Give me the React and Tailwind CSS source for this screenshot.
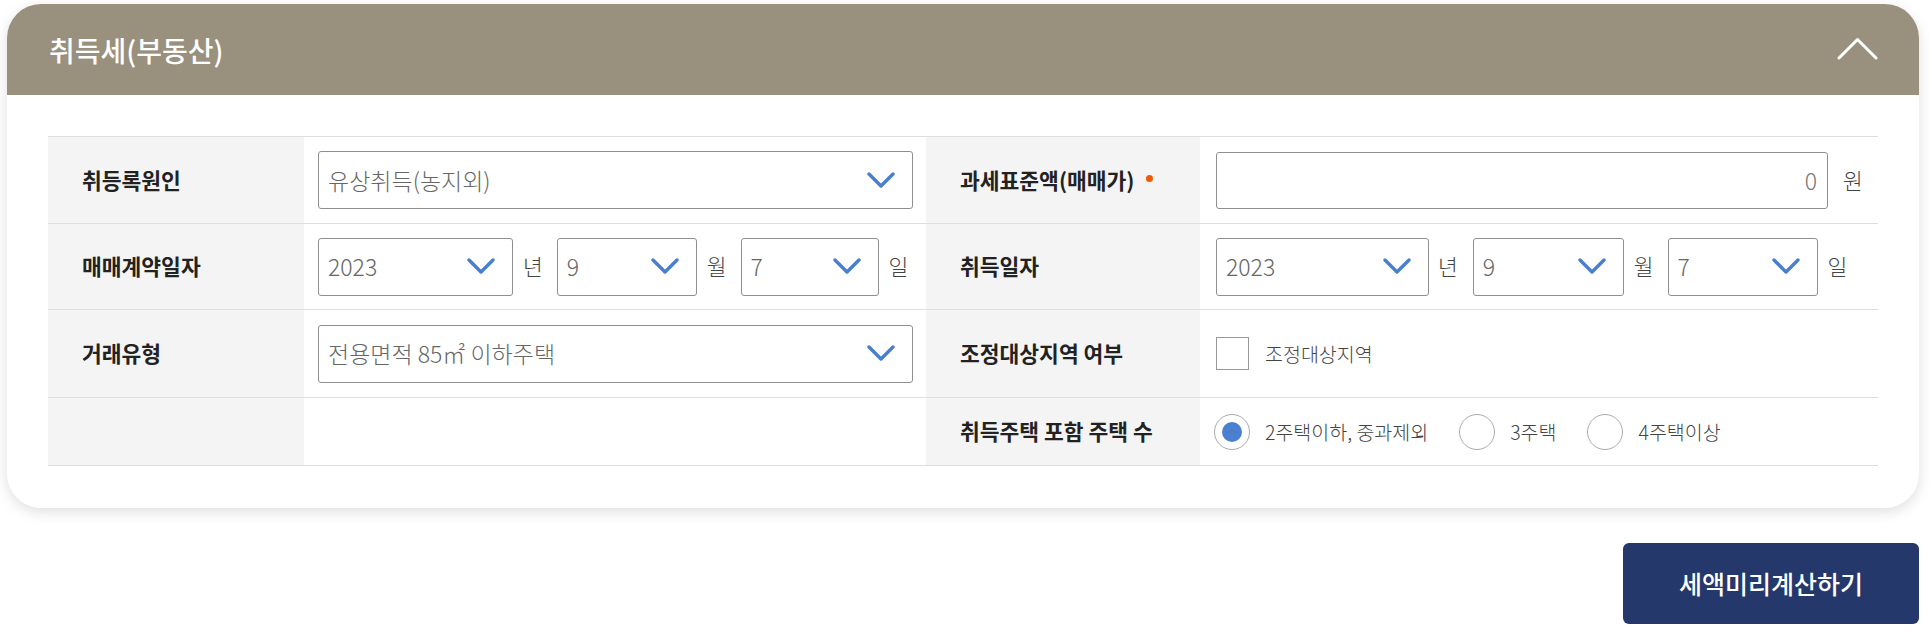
import { useState } from "react";

const font = { fontFamily: '"Noto Sans CJK KR", "Noto Sans", sans-serif' };

function Chevron({ className = "" }) {
  return (
    <svg width="28" height="17" viewBox="0 0 28 17" fill="none" className={className}>
      <polyline points="2,2 14,14 26,2" stroke="#4a7fd0" strokeWidth="3.4" strokeLinecap="round" strokeLinejoin="round" />
    </svg>
  );
}

function SelectBox({ value, width }) {
  return (
    <div
      className={`flex h-[58px] shrink-0 items-center justify-between rounded-[3px] border border-[#8f8f8f] bg-white pl-[9px] pr-[17px] ${width}`}
    >
      <span className="text-[23px] font-light text-[#666]">{value}</span>
      <Chevron />
    </div>
  );
}

function Unit({ children, className = "" }) {
  return <span className={`shrink-0 text-[21.5px] font-light text-[#444] ${className}`}>{children}</span>;
}

function Label({ children, dot }) {
  return (
    <div className="flex items-center bg-[#f4f4f4] pl-[34px] text-[21.5px] font-semibold text-[#222]">
      {children}
      {dot ? <span className="ml-[11px] mt-[-4px] h-[7px] w-[7px] rounded-full bg-[#f05a00]" /> : null}
    </div>
  );
}

function Radio({ checked, label, onClick }) {
  return (
    <button type="button" onClick={onClick} className="mr-[31px] flex items-center">
      <span className="flex h-[36px] w-[36px] items-center justify-center rounded-full border border-[#aaa] bg-white">
        {checked ? <span className="h-[20px] w-[20px] rounded-full bg-[#4b7fd0]" /> : null}
      </span>
      <span className="ml-[15px] text-[19.5px] font-light text-[#444]">{label}</span>
    </button>
  );
}

export default function App() {
  const [houses, setHouses] = useState(0);
  const [adjusted, setAdjusted] = useState(false);

  return (
    <div className="min-h-screen bg-white pl-[7px] pt-[4px]" style={font}>
      <section className="w-[1912px] rounded-[34px] bg-white shadow-[0_4px_14px_rgba(0,0,0,0.13)]">
        <div className="flex h-[91px] items-center justify-between rounded-t-[34px] bg-[#9a907e] pl-[42px] pr-[41px]">
          <h2 className="text-[28px] font-medium text-white">취득세(부동산)</h2>
          <svg width="41" height="23" viewBox="0 0 41 23" fill="none" className="mt-[-2px]">
            <polyline points="2,21 20.5,2.5 39,21" stroke="white" strokeWidth="3" strokeLinecap="round" strokeLinejoin="round" />
          </svg>
        </div>

        <div className="px-[41px] pb-[42px] pt-[41px]">
          <div className="grid grid-cols-[256px_622px_274px_678px] border-t border-[#dedede]">
            {/* row 1 */}
            <div className="col-span-4 grid h-[87px] grid-cols-[256px_622px_274px_678px] border-b border-[#dedede]">
              <Label>취등록원인</Label>
              <div className="flex items-center pl-[14px]">
                <SelectBox value="유상취득(농지외)" width="w-[595px]" />
              </div>
              <Label dot>과세표준액(매매가)</Label>
              <div className="flex items-center pl-[16px]">
                <div className="flex h-[57px] w-[612px] items-center justify-end rounded-[3px] border border-[#8f8f8f] pr-[10px] text-[23px] font-light text-[#777]">
                  0
                </div>
                <Unit className="ml-[15px]">원</Unit>
              </div>
            </div>

            {/* row 2 */}
            <div className="col-span-4 grid h-[86px] grid-cols-[256px_622px_274px_678px] border-b border-[#dedede]">
              <Label>매매계약일자</Label>
              <div className="flex items-center pl-[14px]">
                <SelectBox value="2023" width="w-[195px]" />
                <Unit className="ml-[10px] mr-[14px]">년</Unit>
                <SelectBox value="9" width="w-[140px]" />
                <Unit className="ml-[10px] mr-[14px]">월</Unit>
                <SelectBox value="7" width="w-[138px]" />
                <Unit className="ml-[10px]">일</Unit>
              </div>
              <Label>취득일자</Label>
              <div className="flex items-center pl-[16px]">
                <SelectBox value="2023" width="w-[213px]" />
                <Unit className="ml-[9px] mr-[15px]">년</Unit>
                <SelectBox value="9" width="w-[151px]" />
                <Unit className="ml-[10px] mr-[14px]">월</Unit>
                <SelectBox value="7" width="w-[150px]" />
                <Unit className="ml-[10px]">일</Unit>
              </div>
            </div>

            {/* row 3 */}
            <div className="col-span-4 grid h-[88px] grid-cols-[256px_622px_274px_678px] border-b border-[#dedede]">
              <Label>거래유형</Label>
              <div className="flex items-center pl-[14px]">
                <SelectBox value="전용면적 85㎡ 이하주택" width="w-[595px]" />
              </div>
              <Label>조정대상지역 여부</Label>
              <div className="flex items-center pl-[16px]">
                <button
                  type="button"
                  onClick={() => setAdjusted((prev) => !prev)}
                  className="flex h-[33px] w-[33px] items-center justify-center border border-[#999] bg-white text-[#4b7fd0]"
                >
                  {adjusted ? "✓" : null}
                </button>
                <span className="ml-[16px] text-[19.5px] font-light text-[#444]">조정대상지역</span>
              </div>
            </div>

            {/* row 4 */}
            <div className="col-span-4 grid h-[68px] grid-cols-[256px_622px_274px_678px] border-b border-[#dedede]">
              <div className="bg-[#f4f4f4]" />
              <div />
              <Label>취득주택 포함 주택 수</Label>
              <div className="flex items-center pl-[14px]">
                {["2주택이하, 중과제외", "3주택", "4주택이상"].map((label, index) => (
                  <Radio key={label} label={label} checked={houses === index} onClick={() => setHouses(index)} />
                ))}
              </div>
            </div>
          </div>
        </div>
      </section>

      <div className="flex w-[1912px] justify-end pt-[35px]">
        <button
          type="button"
          className="flex h-[81px] w-[296px] items-center justify-center rounded-[6px] bg-[#24386b] text-[25px] font-medium text-white"
        >
          세액미리계산하기
        </button>
      </div>
    </div>
  );
}
